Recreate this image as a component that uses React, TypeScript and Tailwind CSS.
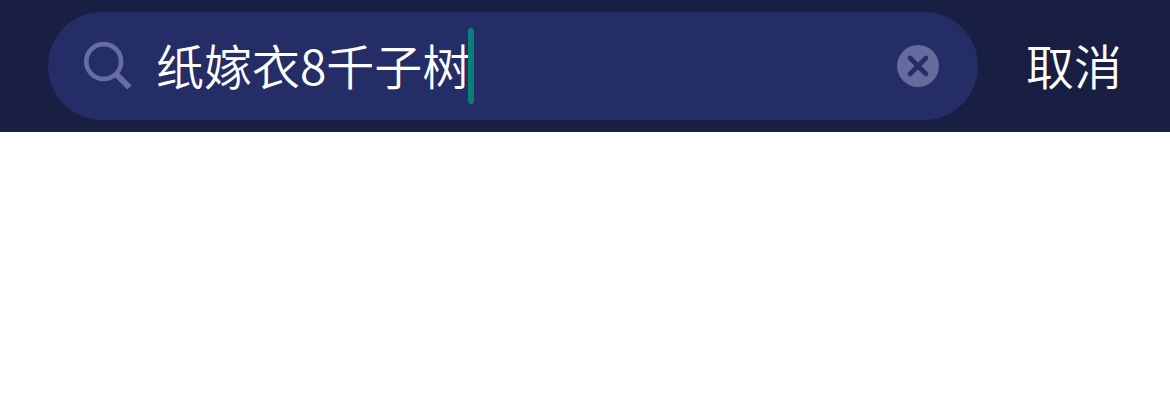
import { useState } from 'react';

function SearchIcon() {
    return (
        <svg viewBox="0 0 48 48" className="w-12 h-12 shrink-0 text-[#656da2]" fill="none" stroke="currentColor" aria-hidden="true">
            <circle cx="19.7" cy="19.5" r="17.4" strokeWidth="4.6" />
            <path d="M31 31 L45.5 45.5" strokeWidth="6" />
        </svg>
    );
}

function ClearIcon() {
    return (
        <svg viewBox="0 0 42 42" className="w-[42px] h-[42px]" aria-hidden="true">
            <circle cx="21" cy="21" r="21" className="fill-[#666b9e]" />
            <path d="M13 13 L29 29 M29 13 L13 29" className="stroke-[#242d65]" strokeWidth="4.6" strokeLinecap="round" />
        </svg>
    );
}

export default function App() {
    const [query, setQuery] = useState('纸嫁衣8千子树');

    return (
        <div className="min-h-screen bg-white font-['Noto_Sans_CJK_SC',sans-serif] text-5xl font-[350] text-white">
            <header className="flex items-center gap-12 bg-[#191e43] px-12 py-3">
                <div className="flex h-[108px] min-w-0 flex-1 items-center rounded-full bg-[#242d65] pl-9 pr-[39px]">
                    <label htmlFor="search" className="flex min-w-0 flex-1 cursor-text items-center">
                        <SearchIcon />
                        <input
                            id="search"
                            type="text"
                            aria-label="搜索"
                            value={query}
                            onChange={(e) => setQuery(e.target.value)}
                            className="ml-6 h-[72px] min-w-0 max-w-full bg-transparent pb-1 caret-transparent outline-none [field-sizing:content]"
                        />
                        <span className="-ml-0.5 h-[76px] w-1.5 shrink-0 rounded-full bg-[#078078]" />
                    </label>
                    <button type="button" aria-label="清除" onClick={() => setQuery('')} className="shrink-0">
                        <ClearIcon />
                    </button>
                </div>
                <button type="button" className="h-[72px] shrink-0 pb-1">取消</button>
            </header>
        </div>
    );
}
